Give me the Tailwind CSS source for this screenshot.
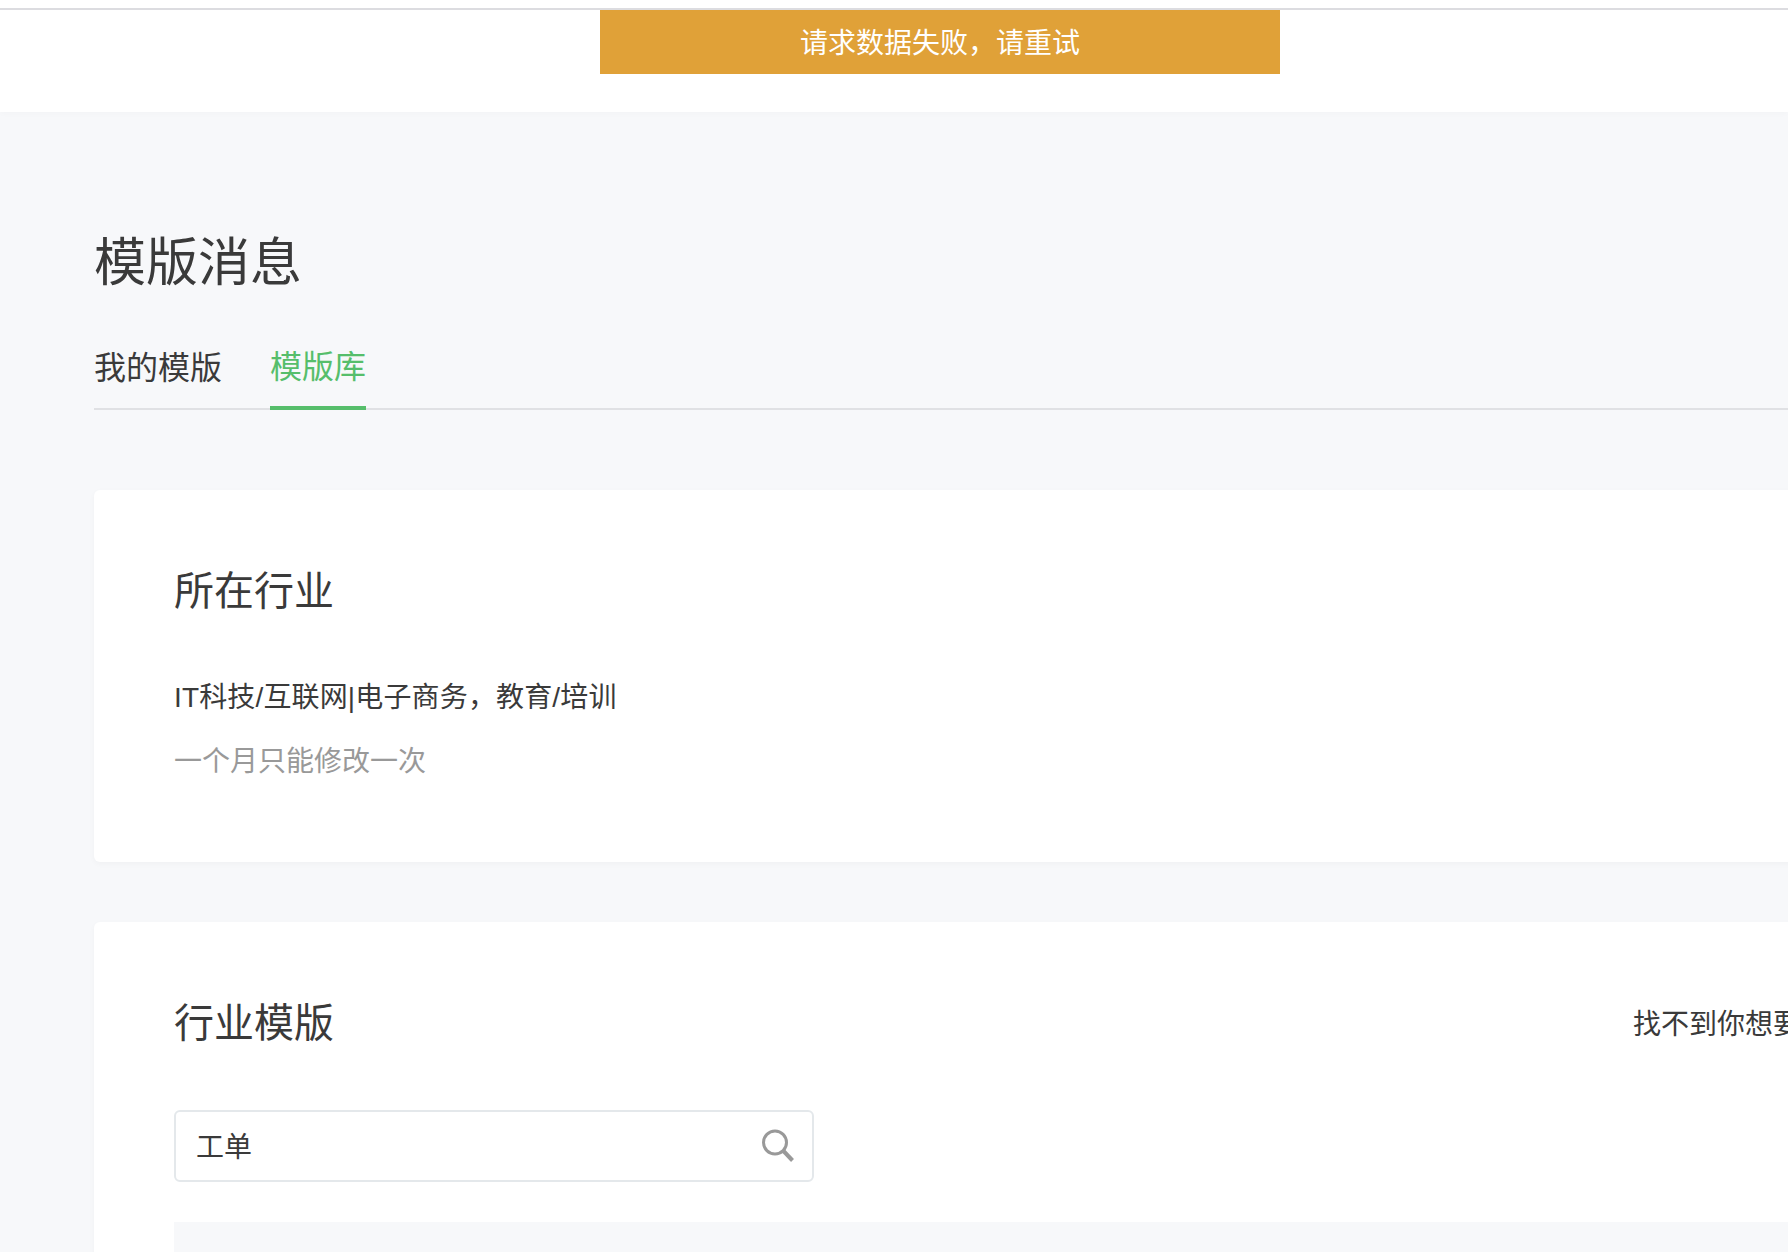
<!DOCTYPE html>
<html lang="zh-CN">
<head>
  <meta charset="UTF-8" />
  <title>模版消息</title>
  <script src="https://cdn.jsdelivr.net/npm/@tailwindcss/browser@4"></script>
</head>
<body class="h-[1252px] w-[1788px] overflow-hidden bg-[#f7f8fa] text-[#3a3a3a] font-['Liberation_Sans','Noto_Sans_CJK_SC',sans-serif]">
  <!-- top bar with warning toast -->
  <header class="h-[112px] bg-white pt-2 shadow-[0_2px_6px_rgba(0,0,0,0.02)]">
    <div class="h-[2px] bg-[#dcdce0]"></div>
    <div class="ml-[600px] flex h-16 w-[680px] items-center justify-center bg-[#e0a138] pt-1 text-[28px] text-white">请求数据失败，请重试</div>
  </header>

  <main class="w-[1871px] pl-[94px] box-content">
    <h1 class="mt-[115px] -mb-[2px] text-[52px] leading-[72px]">模版消息</h1>

    <nav class="flex h-[113px] gap-12 border-b-2 border-[#e0e1e4] text-[32px]">
      <a class="mt-[29px] leading-[84px]">我的模版</a>
      <a class="mt-[29px] h-[84px] border-b-4 border-[#56be6b] leading-[82px] text-[#56be6b]">模版库</a>
    </nav>

    <section class="mt-20 h-[372px] rounded-md bg-white px-20 pt-[73px] shadow-[0_2px_6px_rgba(0,0,0,0.03)]">
      <h2 class="text-[40px] leading-[56px]">所在行业</h2>
      <p class="mt-[57px] text-[28px] leading-[44px] tracking-[0.15px]">IT科技/互联网|电子商务，教育/培训</p>
      <p class="mt-5 text-[28px] leading-[44px] text-[#999]">一个月只能修改一次</p>
    </section>

    <section class="mt-[60px] h-[400px] rounded-md bg-white px-20 pt-[73px] shadow-[0_2px_6px_rgba(0,0,0,0.03)]">
      <div class="flex h-[56px] justify-between">
        <h2 class="text-[40px] leading-[56px]">行业模版</h2>
        <span class="mt-[8px] text-[28px] leading-[44px]">找不到你想要的模版</span>
      </div>
      <div class="mt-[59px] flex h-[72px] w-[640px] items-center justify-between rounded-md border-2 border-[#e4e8eb] pl-5 pr-4 text-[28px]">
        <span class="mt-[3px]">工单</span>
        <svg class="h-9 w-9" viewBox="0 0 36 36" fill="none" stroke="#999">
          <circle cx="15" cy="14.5" r="11.5" stroke-width="3" />
          <path d="M23.5 23l9 9.5" stroke-width="4" />
        </svg>
      </div>
      <div class="mt-10 h-[200px] bg-[#f7f8fa]"></div>
    </section>
  </main>
</body>
</html>
